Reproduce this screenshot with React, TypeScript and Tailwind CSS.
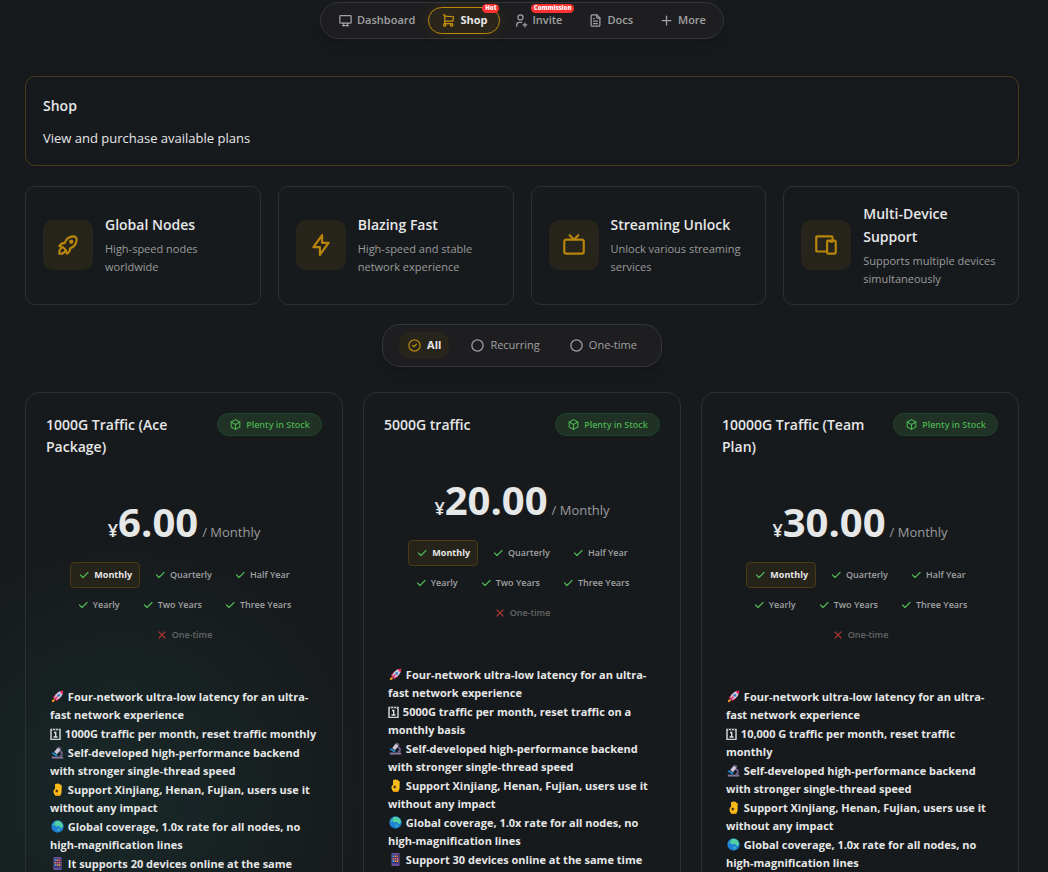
import { useState, type ReactNode } from 'react';
import type { IconType } from 'react-icons';
import {
  TbBolt,
  TbBox,
  TbCheck,
  TbCircle,
  TbCircleCheck,
  TbDeviceDesktop,
  TbDevices,
  TbDeviceTv,
  TbFileText,
  TbPlus,
  TbRocket,
  TbShoppingCart,
  TbUserPlus,
  TbX,
} from 'react-icons/tb';

type NavItem = { label: string; icon: IconType; badge?: string };

const navItems: NavItem[] = [
  { label: 'Dashboard', icon: TbDeviceDesktop },
  { label: 'Shop', icon: TbShoppingCart, badge: 'Hot' },
  { label: 'Invite', icon: TbUserPlus, badge: 'Commission' },
  { label: 'Docs', icon: TbFileText },
  { label: 'More', icon: TbPlus },
];

const features = [
  { title: 'Global Nodes', text: 'High-speed nodes worldwide', icon: TbRocket },
  { title: 'Blazing Fast', text: 'High-speed and stable network experience', icon: TbBolt },
  { title: 'Streaming Unlock', text: 'Unlock various streaming services', icon: TbDeviceTv },
  { title: 'Multi-Device Support', text: 'Supports multiple devices simultaneously', icon: TbDevices },
];

const filters = ['All', 'Recurring', 'One-time'];
const periods = ['Monthly', 'Quarterly', 'Half Year', 'Yearly', 'Two Years', 'Three Years', 'One-time'];

function Rocket() {
  return (
    <svg viewBox="0 0 16 16" className="mx-px inline-block size-[13px] align-[-2px]" aria-hidden="true">
      <path d="M1 15c0-2 1-4 3-4l1 1c0 2-2 3-4 3Z" fill="#f59a23" />
      <path d="M2 9.500 6 5h3L5 10ZM6 14l5-3.500V7l-5 4Z" fill="#e8215c" />
      <path d="M4 10C5 5 9 1 15 1c0 6-4 10-9 11Z" fill="#cfc6dc" />
      <path d="M10.500 1.900C12 1.200 13.500 1 15 1c0 1.500-.2 3-.9 4.500Z" fill="#e8215c" />
      <circle cx="9.500" cy="6.500" r="1.700" fill="#3b82c4" />
      <path d="m4 12 4-4" stroke="#e8215c" strokeWidth="1.500" />
    </svg>
  );
}

function Calendar() {
  return (
    <svg viewBox="0 0 11 12" className="mr-px inline-block h-[12px] w-[11px] align-[-2px]" aria-hidden="true">
      <rect x="1" y="1.500" width="9" height="10" fill="none" stroke="#cfd1d1" strokeWidth="1.500" />
      <path d="M2.500 1v1M5.500 1v1M8.500 1v1" stroke="#1b2626" strokeWidth=".8" />
      <path d="M4 4.500h1.700V9M3.500 9h4" fill="none" stroke="#e0e0e0" strokeWidth="1.400" />
    </svg>
  );
}

function Microscope() {
  return (
    <svg viewBox="0 0 16 16" className="mx-px inline-block size-[13px] align-[-2px]" aria-hidden="true">
      <path d="M1 13h14v2.500H1z" fill="#83769a" />
      <path d="M10 6c4.500 1 4.500 5 1 7" fill="none" stroke="#6d6088" strokeWidth="2.400" />
      <path d="m8 2 4 2-4.500 6L4 7.500Z" fill="#cfc6dc" />
      <path d="m9 .5 4 2-1 2-4-2.500Z" fill="#6a5c7c" />
      <path d="M1.500 8.500 7.500 12" stroke="#1e9be8" strokeWidth="1.800" />
    </svg>
  );
}

function OkHand() {
  return (
    <svg viewBox="0 0 16 16" className="mx-px inline-block size-[13px] align-[-2px]" aria-hidden="true">
      <path
        d="M5 7V1.500q1-1.300 2 0V.8q1.200-1.200 2.200 0v.6q1.200-1 2.200.2v1q1.400-.6 1.800.6L13 10c0 3-1 4-2 6H6C4 14 3 12 3 10q0-2 2-3Z"
        fill="#fcc21b"
      />
      <path d="M7.200 2v4M9.300 2v4.500M11.400 3v4" stroke="#e8a015" strokeWidth=".5" />
      <circle cx="7" cy="9.800" r="1.900" fill="#2b2620" stroke="#e59412" strokeWidth="1.100" />
      <path d="M6 16h5l.8-2H5Z" fill="#e59412" />
    </svg>
  );
}

function Globe() {
  return (
    <svg viewBox="0 0 16 16" className="mx-px inline-block size-[13px] align-[-2px]" aria-hidden="true">
      <circle cx="8" cy="8" r="7.600" fill="#1f7fd6" />
      <path d="M5 1.500q5-2 8 1.500l2 4-2 3-2-1-1-2-3 1-3-2Z" fill="#4fd1a0" />
      <path d="m8 10 3 1-1 3-2-1ZM1.500 5 4 4 3 8Z" fill="#39b7b0" />
    </svg>
  );
}

function Phone() {
  return (
    <svg viewBox="0 0 16 16" className="mx-px inline-block size-[13px] align-[-2px]" aria-hidden="true">
      <rect x="3" y="0" width="10" height="16" rx="1" fill="#65509c" />
      <rect x="4" y="2" width="8" height="11" fill="#39306e" />
      <path d="M4.500 4h2M4.500 10h2" stroke="#35b6f2" strokeWidth="2" />
      <path d="M7 4h2M9.500 10h2" stroke="#f7a531" strokeWidth="2" />
      <path d="M9.500 4h2M7 7h2" stroke="#f0506e" strokeWidth="2" />
      <path d="M4.500 7h2M9.500 7h2M7 10h2" stroke="#e08a5c" strokeWidth="2" />
    </svg>
  );
}

type Plan = { name: string; price: string; traffic: string; devices: string };

const plans: Plan[] = [
  {
    name: '1000G Traffic (Ace Package)',
    price: '6.00',
    traffic: '1000G traffic per month, reset traffic monthly',
    devices: 'It supports 20 devices online at the same time',
  },
  {
    name: '5000G traffic',
    price: '20.00',
    traffic: '5000G traffic per month, reset traffic on a monthly basis',
    devices: 'Support 30 devices online at the same time',
  },
  {
    name: '10000G Traffic (Team Plan)',
    price: '30.00',
    traffic: '10,000 G traffic per month, reset traffic monthly',
    devices: 'Support 50 devices online at the same time',
  },
];

function Nav() {
  return (
    <nav className="mx-auto flex h-[37px] w-fit items-center rounded-full border border-[#343536] bg-[#1e1e20] px-1 text-[11px] shadow-lg">
      {navItems.map(({ label, icon: Icon, badge }) => {
        const active = label === 'Shop';
        return (
          <a
            key={label}
            href="#"
            className={
              active
                ? 'relative flex h-[27px] items-center gap-1 rounded-full border border-[#b8860b] bg-[#2b261b] px-3 font-bold text-[#e8e8e8] shadow-[0_0_12px_rgba(184,134,11,0.15)]'
                : 'relative flex h-[27px] items-center gap-1 border border-transparent px-3 font-semibold text-[#a0a1a2]'
            }
          >
            <Icon className={active ? 'size-[15px] text-[#c8920c]' : 'size-[15px]'} />
            {label}
            {badge && (
              <span className="absolute -top-1 right-0 flex h-[9px] items-center rounded-full bg-[#ff3030] px-[3px] text-[6px] font-extrabold text-white">
                {badge}
              </span>
            )}
          </a>
        );
      })}
    </nav>
  );
}

function Item({ icon, children }: { icon: ReactNode; children: ReactNode }) {
  return (
    <li>
      {icon} {children}
    </li>
  );
}

function PlanCard({ plan }: { plan: Plan }) {
  const [period, setPeriod] = useState('Monthly');
  return (
    <article className="rounded-[14px] border border-[#2d3032] px-5">
      <header className="flex items-start justify-between gap-4 pt-5">
        <h2 className="pt-px text-[14px] leading-[22px] font-semibold">{plan.name}</h2>
        <span className="flex h-[23px] shrink-0 items-center gap-1 rounded-full border border-[#214528] bg-[#1f3225] px-[11px] text-[9px] font-semibold text-[#4caf50]">
          <TbBox className="size-[13px]" />
          Plenty in Stock
        </span>
      </header>

      <div className="mt-[39px] flex h-[50px] items-baseline justify-center">
        <span className="text-[18px] font-semibold">¥</span>
        <span className="text-[40px] leading-[50px] font-bold">{plan.price}</span>
        <span className="ml-1 text-[13px] font-medium text-[#9a9b9c]">/ {period}</span>
      </div>

      <div className="mt-[15px] flex flex-wrap justify-center gap-x-[6px] gap-y-1 px-5">
        {periods.map((name) => {
          const disabled = name === 'One-time';
          return (
            <button
              key={name}
              type="button"
              disabled={disabled}
              onClick={() => setPeriod(name)}
              className={
                name === period
                  ? 'flex h-[26px] items-center gap-1 rounded-[4px] border border-[#4a3a17] bg-[#26231b] px-[7px] text-[9px] font-bold text-[#e8e8e8]'
                  : disabled
                    ? 'flex h-[26px] items-center gap-1 border border-transparent px-[7px] text-[9px] font-semibold text-[#636566]'
                    : 'flex h-[26px] items-center gap-1 border border-transparent px-[7px] text-[9px] font-semibold text-[#a0a1a2]'
              }
            >
              {disabled ? (
                <TbX className="size-3 stroke-[2.4] text-[#a33531]" />
              ) : (
                <TbCheck className="size-3 stroke-[2.6] text-[#4caf50]" />
              )}
              {name}
            </button>
          );
        })}
      </div>

      <ul className="mt-10 flex flex-col gap-px pr-[3px] pl-1 text-[11px] leading-[18px] font-bold">
        <Item icon={<Rocket />}>Four-network ultra-low latency for an ultra-fast network experience</Item>
        <Item icon={<Calendar />}>{plan.traffic}</Item>
        <Item icon={<Microscope />}>Self-developed high-performance backend with stronger single-thread speed</Item>
        <Item icon={<OkHand />}>Support Xinjiang, Henan, Fujian, users use it without any impact</Item>
        <Item icon={<Globe />}>Global coverage, 1.0x rate for all nodes, no high-magnification lines</Item>
        <Item icon={<Phone />}>{plan.devices}</Item>
      </ul>
    </article>
  );
}

export default function App() {
  const [filter, setFilter] = useState('All');
  return (
    <div className="h-screen overflow-y-auto bg-[#171a1d] bg-[radial-gradient(circle_at_120px_790px,#182828_0,#171a1d_250px)] pt-0.5 pr-[29px] pl-[25px] font-['Open_Sans','Noto_Sans',sans-serif] text-[#e6e7e7] [scrollbar-width:none]">
      <Nav />
      <main>
        <section className="mt-[37px] h-[90px] rounded-[10px] border border-[#4a3a17] px-[17px] pt-[17px]">
          <h1 className="text-[14px] leading-[23px] font-semibold">Shop</h1>
          <p className="mt-[11px] text-[13px] leading-[20px]">View and purchase available plans</p>
        </section>

        <section className="mt-5 grid grid-cols-4 gap-[17px]">
          {features.map(({ title, text, icon: Icon }) => (
            <div key={title} className="flex h-[119px] items-center gap-3 rounded-[10px] border border-[#2d3032] px-[17px] pb-0.5">
              <span className="flex size-[50px] shrink-0 items-center justify-center rounded-[10px] bg-[#27241b] text-[#b8860b]">
                <Icon className="size-[26px]" />
              </span>
              <div>
                <h2 className="text-[14px] leading-[23px] font-semibold">{title}</h2>
                <p className="mt-1 text-[11px] leading-[18px] font-medium text-[#999a9b]">{text}</p>
              </div>
            </div>
          ))}
        </section>

        <div className="mx-auto mt-[19px] flex h-[43px] w-fit items-center gap-[13px] rounded-[18px] border border-[#343536] bg-[#1e1e20] px-4 text-[11px] shadow-lg">
          {filters.map((name) => {
            const active = name === filter;
            return (
              <button
                key={name}
                type="button"
                onClick={() => setFilter(name)}
                className={
                  active
                    ? 'flex h-[27px] items-center gap-[5px] rounded-[10px] bg-[#27241b] px-2 font-bold'
                    : 'flex h-[27px] items-center gap-[5px] rounded-[10px] px-2 font-medium text-[#a0a1a2]'
                }
              >
                {active ? <TbCircleCheck className="size-[15px] text-[#b8860b]" /> : <TbCircle className="size-[15px]" />}
                {name}
              </button>
            );
          })}
        </div>

        <section className="mt-[25px] grid grid-cols-3 gap-5">
          {plans.map((plan) => (
            <PlanCard key={plan.name} plan={plan} />
          ))}
        </section>
      </main>
    </div>
  );
}
